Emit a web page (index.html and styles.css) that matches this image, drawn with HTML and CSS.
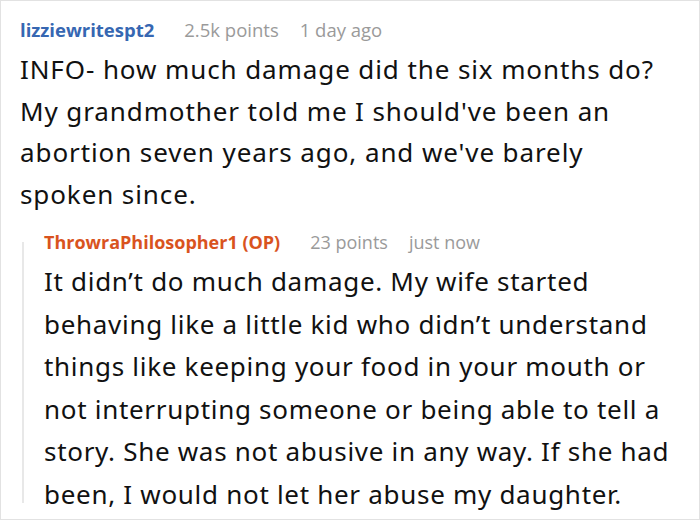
FILE: index.html
```html
<!DOCTYPE html>
<html>
<head>
<meta charset="utf-8">
<link rel="stylesheet" href="styles.css">
</head>
<body>
<div class="card">
  <div class="comment">
    <div class="meta">
      <span class="author">lizziewritespt2</span>
      <span class="points">2.5k points</span>
      <span class="time">1 day ago</span>
    </div>
    <p class="text">INFO- how much damage did the six months do?<br>My grandmother told me I should've been an<br>abortion seven years ago, and we've barely<br>spoken since.</p>
  </div>
  <div class="reply">
    <div class="thread"></div>
    <div class="reply-body">
      <div class="meta">
        <span class="author op">ThrowraPhilosopher1 (OP)</span>
        <span class="points">23 points</span>
        <span class="time">just now</span>
      </div>
      <p class="text">It didn’t do much damage. My wife started<br>behaving like a little kid who didn’t understand<br>things like keeping your food in your mouth or<br>not interrupting someone or being able to tell a<br>story. She was not abusive in any way. If she had<br>been, I would not let her abuse my daughter.</p>
    </div>
  </div>
</div>
</body>
</html>
```
FILE: styles.css
```css
html, body {
  margin: 0;
  padding: 0;
  background: #ffffff;
}
.card {
  width: 700px;
  height: 520px;
  box-sizing: border-box;
  border: 1px solid #e2e2e2;
  padding: 17px 0 0 19px;
  font-family: "Noto Sans", "Open Sans", sans-serif;
  color: #111111;
  overflow: hidden;
}
.meta {
  display: flex;
  font-family: "Open Sans", "Noto Sans", sans-serif;
  font-size: 18.5px;
  line-height: 24px;
  height: 24px;
  white-space: nowrap;
}
.author {
  font-weight: 700;
  color: #3667b2;
}
.reply-body .meta {
  font-size: 18px;
}
.author.op {
  color: #d9531e;
}
.points {
  color: #9a9a9a;
  margin-left: 30px;
}
.time {
  color: #9a9a9a;
  margin-left: 21px;
}
.text {
  margin: 7px 0 0 0;
  font-size: 26px;
  line-height: 41.5px;
  letter-spacing: 0.9px;
  white-space: nowrap;
}
.reply {
  display: flex;
  margin-top: 15px;
  margin-left: 2px;
}
.thread {
  width: 2px;
  flex: none;
  background: #e8e8e8;
  margin: 12px 0 12px 0;
}
.reply-body {
  padding-left: 20px;
}
.reply-body .text {
  margin-top: 6px;
  line-height: 42.5px;
  letter-spacing: 0.7px;
}
```
